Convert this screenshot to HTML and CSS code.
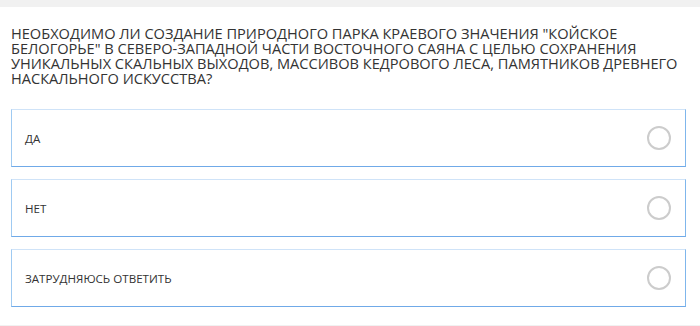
FILE: index.html
```html
<!DOCTYPE html>
<html lang="ru">
<head>
    <meta charset="UTF-8">
    <meta name="viewport" content="width=device-width, initial-scale=1.0">
    <title>Опрос</title>
    <link rel="stylesheet" href="styles.css">
</head>
<body>

    <div class="card">
        <p class="question">НЕОБХОДИМО ЛИ СОЗДАНИЕ ПРИРОДНОГО ПАРКА КРАЕВОГО ЗНАЧЕНИЯ "КОЙСКОЕ<br>
            БЕЛОГОРЬЕ" В СЕВЕРО-ЗАПАДНОЙ ЧАСТИ ВОСТОЧНОГО САЯНА С ЦЕЛЬЮ СОХРАНЕНИЯ<br>
            УНИКАЛЬНЫХ СКАЛЬНЫХ ВЫХОДОВ, МАССИВОВ КЕДРОВОГО ЛЕСА, ПАМЯТНИКОВ ДРЕВНЕГО<br>
            НАСКАЛЬНОГО ИСКУССТВА?</p>

        <div class="answers">
            <label class="answer">
                <span>ДА</span>
                <span class="radio"></span>
            </label>
            <label class="answer">
                <span>НЕТ</span>
                <span class="radio"></span>
            </label>
            <label class="answer">
                <span>ЗАТРУДНЯЮСЬ ОТВЕТИТЬ</span>
                <span class="radio"></span>
            </label>
        </div>
    </div>

</body>
</html>
```

FILE: styles.css
```css
body {
    margin: 0;
    background-color: #f1f1f1;
    font-family: "Open Sans", "Liberation Sans", sans-serif;
    color: #333;
}
.card {
    background-color: #fff;
    margin-top: 7px;
    padding: 19px 11px 18px 11px;
}
.question {
    margin: 0;
    white-space: nowrap;
    font-size: 14.6px;
    line-height: 15px;
}
.answers {
    margin-top: 23px;
    width: 675px;
    display: flex;
    flex-direction: column;
    gap: 12px;
}
.answer {
    height: 56px;
    display: flex;
    align-items: center;
    justify-content: space-between;
    padding: 0 14px 0 13px;
    border: 1px solid;
    border-color: #cfe3f8 #7fb6ec #70aae8 #9fcaf2;
    font-size: 11.6px;
    cursor: pointer;
}
.radio {
    width: 20px;
    height: 20px;
    border: 2px solid #cccccc;
    border-radius: 50%;
}
```
